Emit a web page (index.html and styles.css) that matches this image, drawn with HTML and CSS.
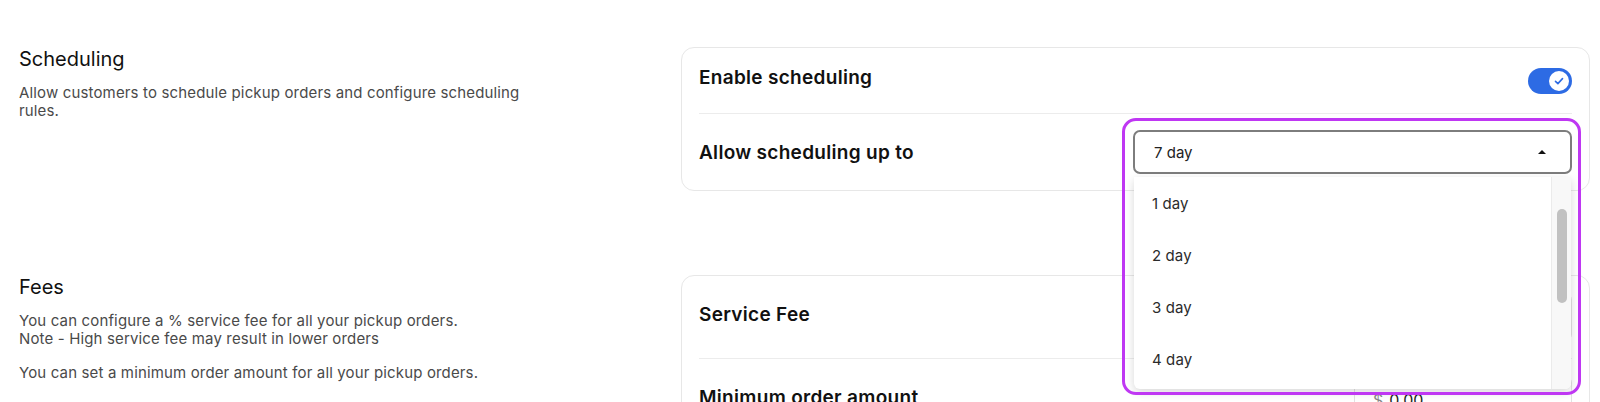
FILE: index.html
```html
<!DOCTYPE html>
<html>

<head>
  <link rel="stylesheet" href="styles.css">
</head>

<body>
  <main class="settings">
    <!-- Scheduling -->
    <section class="setting-group">
      <div class="group-info">
        <h2>Scheduling</h2>
        <p>Allow customers to schedule pickup orders and configure scheduling rules.</p>
      </div>
      <div class="card">
        <div class="card-row">
          <span class="row-label">Enable scheduling</span>
          <span class="toggle on">
            <span class="knob">
              <svg width="12" height="12" viewBox="0 0 12 12">
                <path d="M2.5 6.3l2.4 2.3 4.6-5" fill="none" stroke="#2d6be4" stroke-width="1.6" stroke-linecap="round" stroke-linejoin="round" />
              </svg>
            </span>
          </span>
        </div>
        <div class="card-row select-row">
          <span class="row-label">Allow scheduling up to</span>
          <div class="select-wrap">
            <div class="select">
              <span>7 day</span>
              <span class="caret"></span>
            </div>
            <div class="dropdown">
              <ul class="options">
                <li>1 day</li>
                <li>2 day</li>
                <li>3 day</li>
                <li>4 day</li>
                <li>5 day</li>
              </ul>
              <div class="scroll-track">
                <div class="scroll-thumb"></div>
              </div>
            </div>
            <div class="highlight"></div>
          </div>
        </div>
      </div>
    </section>

    <!-- Fees -->
    <section class="setting-group">
      <div class="group-info">
        <h2>Fees</h2>
        <p>You can configure a % service fee for all your pickup orders.<br>Note - High service fee may result in lower orders</p>
        <p class="spaced">You can set a minimum order amount for all your pickup orders.</p>
      </div>
      <div class="card">
        <div class="card-row">
          <span class="row-label">Service Fee</span>
          <div class="amount-input">
            <span class="value">0</span>
            <span class="unit">%</span>
          </div>
        </div>
        <div class="card-row">
          <span class="row-label">Minimum order amount</span>
          <div class="amount-input">
            <span class="unit">$</span>
            <span class="value">0.00</span>
          </div>
        </div>
      </div>
    </section>
  </main>
</body>

</html>
```

FILE: styles.css
```css
body {
  margin: 0;
  background-color: #fff;
  font-family: Inter, "Noto Sans", sans-serif;
  color: #111;
}

/* Page layout */
.settings {
  display: flex;
  flex-direction: column;
  gap: 84px;
  padding: 47px 10px 0 19px;
}

.setting-group {
  display: grid;
  grid-template-columns: 662px 909px;
  align-items: start;
}

.group-info h2 {
  margin: 0;
  font-size: 20px;
  font-weight: 400;
  line-height: 24px;
  color: #111;
}

.group-info p {
  margin: 13px 0 0;
  max-width: 525px;
  font-size: 15px;
  letter-spacing: 0.15px;
  line-height: 17.5px;
  color: #4a4a4a;
}

.group-info p.spaced {
  margin-top: 17px;
}

/* Cards */
.card {
  border: 1px solid #e7e7e7;
  border-radius: 13px;
  padding: 0 17px;
  background-color: #fff;
}

.card-row {
  display: flex;
  align-items: center;
  justify-content: space-between;
  min-height: 33px;
  padding: 16px 0;
}

.card-row + .card-row {
  border-top: 1px solid #ececec;
}

.row-label {
  margin-bottom: 6px;
  font-size: 19px;
  font-weight: 600;
  letter-spacing: 0.3px;
  color: #111;
}

.select-row .row-label {
  margin-bottom: 0;
}

/* Toggle */
.toggle {
  display: flex;
  align-items: center;
  justify-content: flex-end;
  width: 44px;
  height: 26px;
  padding: 0 3px;
  box-sizing: border-box;
  border-radius: 13px;
  background-color: #ccc;
}

.toggle.on {
  background-color: #2d6be4;
}

.knob {
  display: flex;
  align-items: center;
  justify-content: center;
  width: 20px;
  height: 20px;
  border-radius: 50%;
  background-color: #fff;
}

/* Select with open list */
.select-wrap {
  position: relative;
  z-index: 10;
  width: 439px;
}

.select {
  display: flex;
  align-items: center;
  justify-content: space-between;
  height: 44px;
  box-sizing: border-box;
  padding: 0 24px 0 19px;
  border: 2px solid #7d7d7d;
  border-radius: 7px;
  background-color: #fff;
  font-size: 15px;
  color: #222;
}

.caret {
  width: 0;
  height: 0;
  border-left: 4px solid transparent;
  border-right: 4px solid transparent;
  border-bottom: 4px solid #111;
}

.dropdown {
  position: absolute;
  top: calc(100% + 3px);
  left: 1px;
  right: 1px;
  height: 212px;
  display: flex;
  background-color: #fff;
  border-radius: 0 0 6px 6px;
  box-shadow: 0 3px 10px rgba(0, 0, 0, 0.16);
  overflow: hidden;
}

.options {
  flex: 1;
  list-style-type: none;
  margin: 0;
  padding: 0;
}

.options li {
  display: flex;
  align-items: center;
  height: 52px;
  padding-left: 18px;
  font-size: 15px;
  letter-spacing: 0.1px;
  color: #2b2b2b;
}

.scroll-track {
  width: 19px;
  border-left: 1px solid #ebebeb;
  background-color: #f8f8f8;
  display: flex;
  justify-content: center;
}

.scroll-thumb {
  width: 10px;
  height: 94px;
  margin-top: 32px;
  border-radius: 5px;
  background-color: #c1c1c1;
}

/* Annotation outline */
.highlight {
  position: absolute;
  top: -12px;
  left: -11px;
  right: -9px;
  bottom: -221px;
  border: 3px solid #bf37f3;
  border-radius: 14px;
  pointer-events: none;
}

/* Amount inputs */
.amount-input {
  display: flex;
  align-items: center;
  gap: 6px;
  width: 218px;
  height: 50px;
  box-sizing: border-box;
  padding: 0 18px;
  border: 1px solid #e2e2e2;
  border-radius: 8px;
  font-size: 16px;
}

.amount-input .unit {
  color: #888;
}

.amount-input .value {
  color: #222;
}
```
